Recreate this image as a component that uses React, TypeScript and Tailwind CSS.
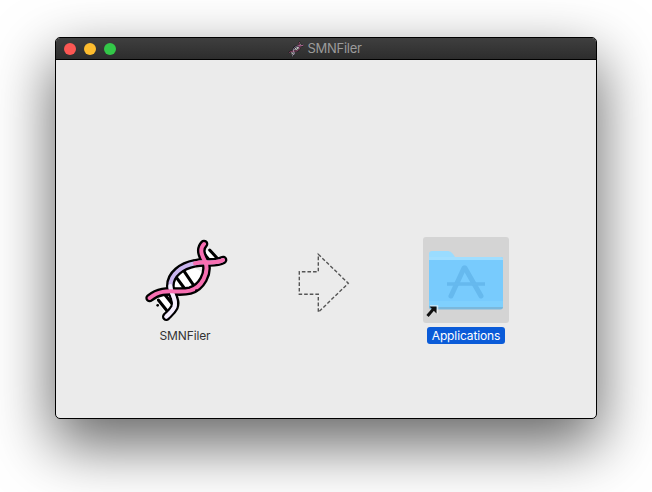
import React from 'react';

const strandA = 'M207 42 C192 58 200 76 212 98 C222 130 200 172 165 182 C125 192 85 170 44 204';
const strandB = 'M264 90 C240 104 210 92 180 100 C140 108 106 132 106 168 C106 190 128 210 118 232 C112 244 104 250 94 260';

const DnaIcon = ({ className }: { className?: string }) => (
  <svg viewBox="21 21 258 258" className={className} fill="none" strokeLinecap="round" strokeLinejoin="round">
    {/* rungs */}
    <path d="M212 58 L252 92 L212 98 Z" fill="#fff" />
    <path d="M112 150 L160 106 L208 128 L170 182 L128 186 Z" fill="#fff" />
    <path d="M60 205 L100 184 L120 226 L95 256 Z" fill="#fff" />
    <g stroke="#000" strokeWidth="9">
      <path d="M206 70 L226 94" />
      <path d="M224 60 L248 86" />
      <path d="M124 142 L152 180" />
      <path d="M146 122 L176 166" />
      <path d="M70 210 L94 240" />
      <path d="M88 192 L112 222" />
    </g>
    <path d={strandB} stroke="#000" strokeWidth="26" />
    <path d={strandA} stroke="#000" strokeWidth="26" />
    <path d={strandB} stroke="#c9b5ee" strokeWidth="12" />
    <path d="M264 90 C240 104 210 92 180 100" stroke="#f76fb2" strokeWidth="12" />
    <path d="M106 168 C106 190 128 210 118 232 C112 244 104 250 94 260" stroke="#f4eefc" strokeWidth="12" />
    <path d={strandA} stroke="#f76fb2" strokeWidth="12" />
    <circle cx="184" cy="182" r="4" fill="#000" />
    <circle cx="68" cy="226" r="4" fill="#000" />
  </svg>
);

const FolderIcon = () => (
  <svg viewBox="0 0 86 86" className="w-[86px] h-[86px]">
    {/* tab */}
    <path d="M6 17 Q6 14 9 14 H25 Q28 14 30 17 L32 20 H78 Q80 20 80 23 V30 H6 Z" fill="#9adcff" />
    {/* body */}
    <path d="M6 20 H78 Q80 20 80 23 V69 Q80 71.5 77 71.5 H9 Q6 71.5 6 69 Z" fill="#78cbfd" />
    <path d="M6 20 H78 Q80 20 80 22 V23 H6 Z" fill="#a0deff" />
    <rect x="6" y="64" width="74" height="6" fill="#7fd0fd" />
    <path d="M6 70 H80 Q80 72.5 77 72.5 H9 Q6 72.5 6 70 Z" fill="#7ab8dc" />
    {/* applications glyph */}
    <g stroke="#66b9ee" fill="none">
      <path d="M41 31 L28 59" strokeWidth="5" strokeLinecap="round" />
      <path d="M42 31 L58 59" strokeWidth="5" strokeLinecap="round" />
      <path d="M24 47 H62" strokeWidth="3.5" />
    </g>
    {/* alias arrow */}
    <path d="M5 80 L12 72 M7 69 H14.5 V76.5" stroke="#f2f2f2" strokeWidth="1.5" fill="none" opacity="0.7" />
    <path d="M4.5 79 L10.5 72" stroke="#111" strokeWidth="3" fill="none" />
    <path d="M6.5 69.5 H13.5 V76.5 Z" fill="#111" />
  </svg>
);

const Arrow = () => (
  <svg viewBox="0 0 52 62" className="w-[52px] h-[62px] mt-[15px] shrink-0">
    <path
      d="M20.3 2.3 L50.3 31.3 L20.3 60.3 V42.3 H1.3 V19.7 H20.3 Z"
      fill="none"
      stroke="#555"
      strokeWidth="1.4"
      strokeDasharray="3.6 2"
    />
  </svg>
);

export default function App() {
  return (
    <div className='h-screen bg-white overflow-hidden pt-[37px] px-[55px] font-["Inter","Liberation_Sans",sans-serif]'>
      <div className="h-[382px] rounded-[5px] border border-black bg-[#ebebeb] overflow-hidden shadow-[0_24px_60px_2px_rgba(0,0,0,0.6)]">
        <div className="relative h-[22px] flex items-center justify-center border-b border-black bg-gradient-to-b from-[#3f3f3f] to-[#2d2d2d]">
          <div className="absolute left-[8px] top-[5px] flex gap-[8px]">
            <span className="w-3 h-3 rounded-full bg-[#fc5753]" />
            <span className="w-3 h-3 rounded-full bg-[#fdbc2e]" />
            <span className="w-3 h-3 rounded-full bg-[#33c748]" />
          </div>
          <div className="flex items-center gap-[3px] -translate-x-px text-[13px] leading-none tracking-[-0.02em] text-[#9b9b9b]">
            <DnaIcon className="w-4 h-4 opacity-70" />
            <span>SMNFiler</span>
          </div>
        </div>
        <div className="flex pt-[177px] pl-[86px]">
          <div className="w-[86px] flex flex-col items-center">
            <DnaIcon className="w-[86px] h-[86px]" />
            <span className="mt-[5px] px-[3px] text-xs leading-[16px] tracking-[-0.01em] text-[#333]">SMNFiler</span>
          </div>
          <div className="ml-[70px]">
            <Arrow />
          </div>
          <div className="ml-[73px] w-[86px] flex flex-col items-center">
            <div className="rounded-[3px] bg-[#d4d4d4]">
              <FolderIcon />
            </div>
            <span className="mt-[4px] px-[4.5px] rounded-[3px] bg-[#0a5bd8] text-xs leading-[17px] tracking-[-0.01em] text-white">Applications</span>
          </div>
        </div>
      </div>
    </div>
  );
}
